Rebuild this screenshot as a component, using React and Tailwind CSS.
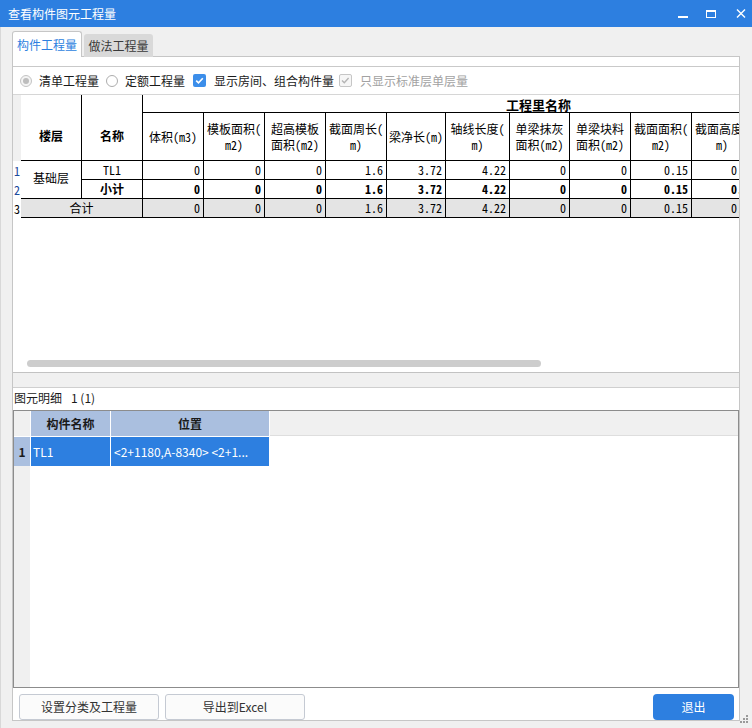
const mono = "font-['Noto_Sans_Mono_CJK_SC','Liberation_Mono','Noto_Sans_CJK_SC',monospace]"

const cols = [
    { w: 'w-[61px]', h: ['体积(m3)'], v: '0' },
    { w: 'w-[61px]', h: ['模板面积(', 'm2)'], v: '0' },
    { w: 'w-[61px]', h: ['超高模板', '面积(m2)'], v: '0' },
    { w: 'w-[61px]', h: ['截面周长(', 'm)'], v: '1.6' },
    { w: 'w-[59px]', h: ['梁净长(m)'], v: '3.72' },
    { w: 'w-[64px]', h: ['轴线长度(', 'm)'], v: '4.22' },
    { w: 'w-[60px]', h: ['单梁抹灰', '面积(m2)'], v: '0' },
    { w: 'w-[61px]', h: ['单梁块料', '面积(m2)'], v: '0' },
    { w: 'w-[61px]', h: ['截面面积(', 'm2)'], v: '0.15' },
    { w: 'w-[61px]', h: ['截面高度(', 'm)'], v: '0.5' },
    { w: 'w-[61px]', h: ['截面宽度(', 'm)'], v: '0.3' },
    { w: 'w-[60px]', h: ['侧面面积(', 'm2)'], v: '0' },
    { w: 'w-[60px]', h: ['梁底面积(', 'm2)'], v: '0' },
]

function TitleBar() {
    return (
        <div className="flex h-[27px] items-center bg-[#2d7fe0] pl-[8px] text-white">
            <span className="leading-none">查看构件图元工程量</span>
            <div className="ml-auto flex items-center pr-[6px]">
                <svg width="10" height="8" viewBox="0 0 10 8">
                    <rect x="0" y="6" width="10" height="2" fill="#fff" />
                </svg>
                <svg className="ml-[18px]" width="10" height="8" viewBox="0 0 10 8">
                    <rect x="0.5" y="0.5" width="9" height="7" fill="none" stroke="#fff" strokeWidth="1" />
                    <rect x="0" y="0" width="10" height="2" fill="#fff" />
                </svg>
                <svg className="ml-[20px]" width="10" height="9" viewBox="0 0 10 9">
                    <path d="M1 0.5 L9 8.5 M9 0.5 L1 8.5" stroke="#fff" strokeWidth="1.4" />
                </svg>
            </div>
        </div>
    )
}

function Options() {
    return (
        <div className="flex h-[28px] items-center border-b border-[#d6d6d6] pl-[7px]">
            <span className="grid h-[12px] w-[12px] place-items-center rounded-full border border-[#c4c4c4] bg-[#f4f4f4]">
                <span className="h-[6px] w-[6px] rounded-full bg-[#bdbdbd]" />
            </span>
            <span className="ml-[7px]">清单工程量</span>
            <span className="ml-[7px] h-[12px] w-[12px] rounded-full border border-[#adadad] bg-white" />
            <span className="ml-[7px]">定额工程量</span>
            <span className="ml-[8px] grid h-[13px] w-[13px] place-items-center rounded-[2px] bg-[#3c8eea]">
                <svg width="11" height="11" viewBox="0 0 11 11">
                    <path d="M2.2 5.6 L4.5 7.9 L8.8 3.3" fill="none" stroke="#fff" strokeWidth="1.6" />
                </svg>
            </span>
            <span className="ml-[8px]">显示房间、组合构件量</span>
            <span className="ml-[5px] grid h-[13px] w-[13px] place-items-center rounded-[2px] border border-[#c6c6c6] bg-[#f6f6f6]">
                <svg width="11" height="11" viewBox="0 0 11 11">
                    <path d="M2 5.4 L4.3 7.7 L8.6 3.1" fill="none" stroke="#b4b4b4" strokeWidth="1.4" />
                </svg>
            </span>
            <span className="ml-[8px] text-[#a2a2a2]">只显示标准层单层量</span>
        </div>
    )
}

function QuantityTable() {
    const rows = [
        { n: '1', bold: false, gray: false },
        { n: '2', bold: true, gray: false },
        { n: '3', bold: false, gray: true },
    ]
    return (
        <div className={`flex text-[12px] text-black ${mono}`}>
            <div className="w-[8px] shrink-0">
                <div className="h-[66px] bg-[#f0f0f0]" />
                {rows.map((r) => (
                    <div key={r.n} className={`flex h-[19px] items-center pl-[1px] leading-none ${r.n === '3' ? 'text-black' : 'text-[#1c4a9c]'}`}>
                        {r.n}
                    </div>
                ))}
            </div>
            <div className="w-[122px] shrink-0">
                <div className="flex h-[66px] border-b border-black font-bold">
                    <div className="flex w-[61px] items-center justify-center border-r border-black pt-[16px]">楼层</div>
                    <div className="flex w-[61px] items-center justify-center border-r border-black pt-[16px]">名称</div>
                </div>
                <div className="flex">
                    <div className="flex h-[38px] w-[61px] items-center justify-center border-r border-b border-black pb-[4px]">基础层</div>
                    <div className="w-[61px]">
                        <div className="flex h-[19px] items-center justify-center border-r border-b border-black">TL1</div>
                        <div className="flex h-[19px] items-center justify-center border-r border-b border-black font-bold">小计</div>
                    </div>
                </div>
                <div className="flex h-[19px] items-center justify-center border-r border-b border-black bg-[#e4e4e4]">合计</div>
            </div>
            <div className="shrink-0">
                <div className="flex h-[18px] w-[791px] items-center justify-center border-b border-black pt-[2px] text-[13px] font-bold">
                    工程里名称
                </div>
                <div className="flex">
                    {cols.map((c, i) => (
                        <div key={i} className={`${c.w} shrink-0`}>
                            <div className="flex h-[48px] flex-col items-center justify-center border-r border-b border-black leading-[16px] whitespace-nowrap">
                                {c.h.map((t) => (
                                    <span key={t}>{t}</span>
                                ))}
                            </div>
                            {rows.map((r) => (
                                <div
                                    key={r.n}
                                    className={`flex h-[19px] items-center justify-end border-r border-b border-black pr-[3px] ${r.bold ? 'font-bold' : ''} ${r.gray ? 'bg-[#e4e4e4]' : ''}`}
                                >
                                    {c.v}
                                </div>
                            ))}
                        </div>
                    ))}
                </div>
            </div>
        </div>
    )
}

function DetailGrid() {
    return (
        <div className="flex h-[278px] flex-col border border-[#8c8c8c]">
            <div className="flex h-[25px] font-bold">
                <div className="w-[17px] border-r border-white bg-[#f0f0f0]" />
                <div className="flex w-[80px] items-center justify-center border-r border-white bg-[#aabfdf]">构件名称</div>
                <div className="flex w-[159px] items-center justify-center border-r border-white bg-[#aabfdf]">位置</div>
                <div className="flex-1 border-b border-[#dedede] bg-[#f0f0f0]" />
            </div>
            <div className="flex h-[30px] border-t border-white">
                <div className="flex w-[17px] items-center justify-center border-r border-white bg-[#aabfdf] font-bold">1</div>
                <div className="flex w-[80px] items-center border-r border-white bg-[#2d7fe0] pl-[2px] text-white">TL1</div>
                <div className="flex w-[159px] items-center overflow-hidden whitespace-nowrap border-r border-white bg-[#2d7fe0] pl-[3px] text-white">
                    &lt;2+1180,A-8340&gt; &lt;2+1...
                </div>
                <div className="flex-1 bg-white" />
            </div>
            <div className="flex flex-1">
                <div className="w-[16px] bg-[#f0f0f0]" />
                <div className="flex-1 bg-white" />
            </div>
        </div>
    )
}

export default function App() {
    return (
        <div className="relative h-[728px] w-[752px] overflow-hidden bg-[#f0f0f0] font-['Noto_Sans_CJK_SC',sans-serif] text-[12px] text-[#1a1a1a]">
            <TitleBar />
            <div className="h-[701px] border-l border-[#d8d8d8] pl-[11px]">
                <div className="flex h-[29px] items-end">
                    <div className="relative z-10 -mb-px flex h-[26px] w-[70px] items-center justify-center rounded-t-[3px] border border-b-0 border-[#c6c6c6] bg-white text-[#2d7fe0]">
                        构件工程量
                    </div>
                    <div className="relative z-10 -mb-px ml-[2px] flex h-[23px] w-[69px] items-center justify-center rounded-t-[3px] bg-[#d9d9d9] text-[#3a3a3a]">
                        做法工程量
                    </div>
                </div>
                <div className="flex h-[665px] w-[728px] flex-col border border-[#c6c6c6] bg-white">
                    <div className="h-[9px]" />
                    <div className="border-t border-[#c9c9c9]">
                        <Options />
                        <div className="flex h-[278px] flex-col border-b border-[#c2c2c2]">
                            <div className="min-h-0 flex-1 overflow-hidden">
                                <QuantityTable />
                            </div>
                            <div className="mb-[5px] ml-[14px] h-[7px] w-[514px] rounded-full bg-[#cdcdcd]" />
                        </div>
                    </div>
                    <div className="h-[15px] border-b border-[#cfcfcf] bg-[#f0f0f0]" />
                    <div className="flex h-[22px] items-center pb-[3px] pl-[1px]">
                        <span>图元明细</span>
                        <span className="ml-[9px]">1 (1)</span>
                    </div>
                    <DetailGrid />
                    <div className="mt-[6px] flex h-[26px]">
                        <button className="ml-[6px] w-[140px] rounded-[3px] border border-[#c5cad3] bg-[#fbfbfb] text-[#333]">设置分类及工程量</button>
                        <button className="ml-[6px] w-[140px] rounded-[3px] border border-[#c5cad3] bg-[#fbfbfb] text-[#333]">导出到Excel</button>
                        <button className="mr-[5px] ml-auto w-[81px] rounded-[4px] bg-[#2d7fe0] text-white">退出</button>
                    </div>
                </div>
            </div>
            <svg className="absolute right-[4px] bottom-[5px]" width="8" height="8" viewBox="0 0 8 8">
                <rect x="6" y="0" width="2" height="2" fill="#9a9a9a" />
                <rect x="3" y="3" width="2" height="2" fill="#9a9a9a" />
                <rect x="6" y="3" width="2" height="2" fill="#9a9a9a" />
                <rect x="0" y="6" width="2" height="2" fill="#9a9a9a" />
                <rect x="3" y="6" width="2" height="2" fill="#9a9a9a" />
                <rect x="6" y="6" width="2" height="2" fill="#9a9a9a" />
            </svg>
        </div>
    )
}
